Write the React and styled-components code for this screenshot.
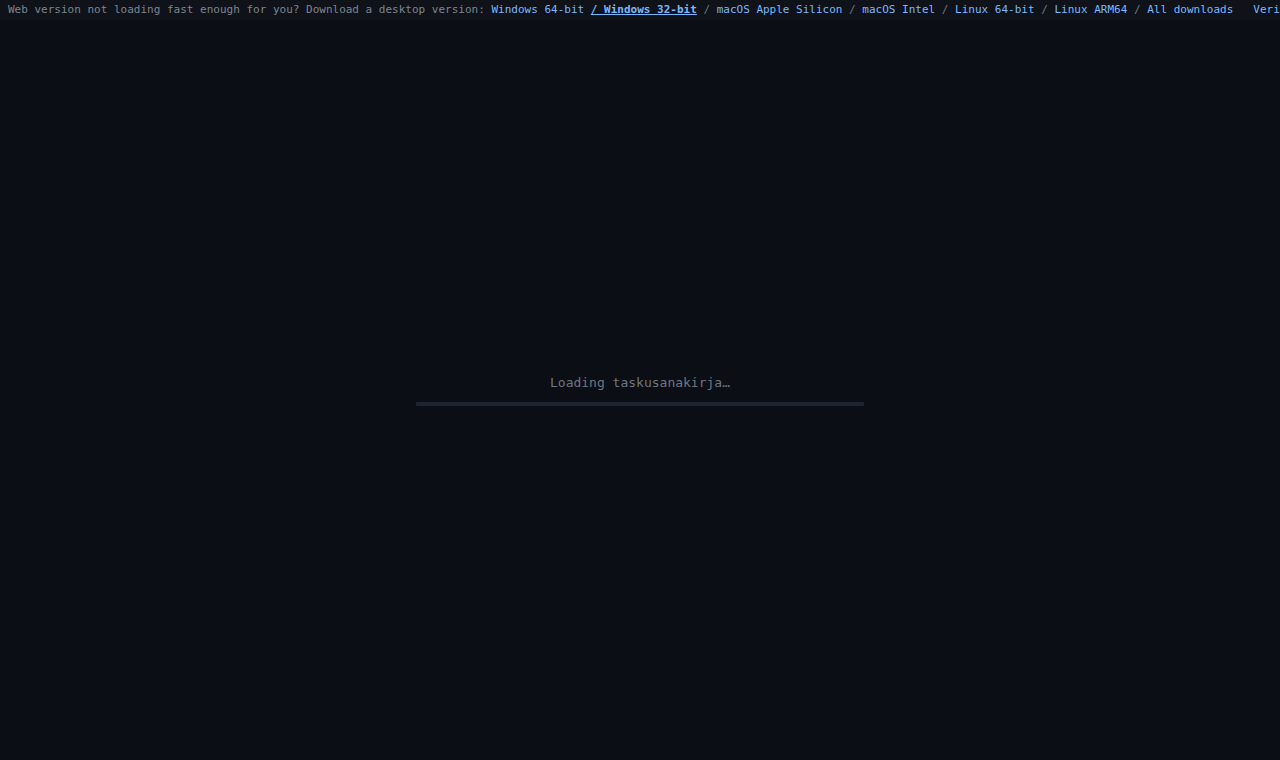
import React from "react";
import styled, { createGlobalStyle } from "styled-components";

const Global = createGlobalStyle`
  html, body { margin: 0; padding: 0; background: #0b0e14; height: 100%; }
  #root { height: 100%; }
  * { box-sizing: border-box; }
`;

const Page = styled.div`
  display: flex;
  flex-direction: column;
  height: 100vh;
  background: #0b0e14;
  font-family: "DejaVu Sans Mono", monospace;
`;

const Banner = styled.div`
  height: 20px;
  flex: none;
  display: flex;
  align-items: center;
  padding: 0 8px;
  background: #0f1219;
  font-size: 11px;
  line-height: 20px;
  white-space: nowrap;
  overflow: hidden;
  color: #7d8590;
`;

const Intro = styled.span`
  white-space: pre;
`;

const Link = styled.a`
  color: #79b8ff;
  text-decoration: ${(p) => (p.$active ? "underline" : "none")};
  font-weight: ${(p) => (p.$active ? "bold" : "normal")};
  white-space: pre;
`;

const Sep = styled.span`
  color: #6e7681;
  white-space: pre;
`;

const Extra = styled.a`
  color: #79b8ff;
  margin-left: 20px;
  text-decoration: none;
`;

const Center = styled.div`
  flex: 1;
  display: flex;
  flex-direction: column;
  align-items: center;
  justify-content: center;
  gap: 11px;
`;

const Title = styled.div`
  font-size: 13px;
  line-height: 17px;
  color: #6e7681;
`;

const Track = styled.div`
  width: 448px;
  height: 4px;
  background: #1d2330;
  border-radius: 1px;
`;

const links = [
  "Windows 64-bit",
  "Windows 32-bit",
  "macOS Apple Silicon",
  "macOS Intel",
  "Linux 64-bit",
  "Linux ARM64",
  "All downloads",
];

export default function App() {
  return (
    <Page>
      <Global />
      <Banner>
        <Intro>Web version not loading fast enough for you? Download a desktop version: </Intro>
        {links.map((l, i) => {
          if (i === 0) return <Link key={l} href="#">{l}</Link>;
          if (i === 1)
            return (
              <React.Fragment key={l}>
                <Sep> </Sep>
                <Link $active href="#">{"/ " + l}</Link>
              </React.Fragment>
            );
          return (
            <React.Fragment key={l}>
              <Sep> / </Sep>
              <Link href="#">{l}</Link>
            </React.Fragment>
          );
        })}
        <Extra href="#">Verify download signatures</Extra>
      </Banner>
      <Center>
        <Title>Loading taskusanakirja…</Title>
        <Track />
      </Center>
    </Page>
  );
}
